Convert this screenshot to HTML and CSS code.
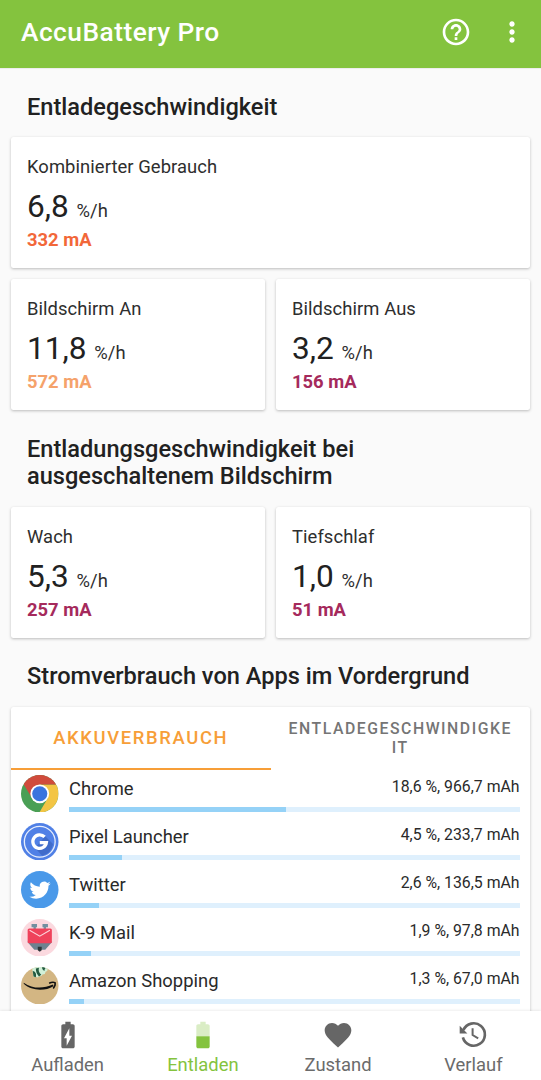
FILE: index.html
```html
<!DOCTYPE html>
<html lang="de">
<head>
    <meta charset="utf-8">
    <title>AccuBattery Pro</title>
    <link rel="stylesheet" href="styles.css">
</head>
<body>
    <header class="toolbar">
        <h1>AccuBattery Pro</h1>
        <svg class="help" viewBox="0 0 24 24"><path d="M11 18h2v-2h-2v2zm1-16C6.480 2 2 6.480 2 12s4.480 10 10 10 10-4.480 10-10S17.520 2 12 2zm0 18c-4.410 0-8-3.590-8-8s3.590-8 8-8 8 3.590 8 8-3.590 8-8 8zm0-14c-2.210 0-4 1.790-4 4h2c0-1.100.9-2 2-2s2 .9 2 2c0 2-3 1.750-3 5h2c0-2.250 3-2.500 3-5 0-2.210-1.790-4-4-4z"/></svg>
        <svg class="more" viewBox="0 0 24 24"><path d="M12 8c1.100 0 2-.9 2-2s-.9-2-2-2-2 .9-2 2 .9 2 2 2zm0 2c-1.100 0-2 .9-2 2s.9 2 2 2 2-.9 2-2-.9-2-2-2zm0 6c-1.100 0-2 .9-2 2s.9 2 2 2 2-.9 2-2-.9-2-2-2z"/></svg>
    </header>

    <main class="content">
        <h2>Entladegeschwindigkeit</h2>
        <div class="cards">
            <div class="card wide">
                <div class="label">Kombinierter Gebrauch</div>
                <div class="value">6,8 <span>%/h</span></div>
                <div class="current high">332 mA</div>
            </div>
            <div class="card">
                <div class="label">Bildschirm An</div>
                <div class="value">11,8 <span>%/h</span></div>
                <div class="current medium">572 mA</div>
            </div>
            <div class="card">
                <div class="label">Bildschirm Aus</div>
                <div class="value">3,2 <span>%/h</span></div>
                <div class="current low">156 mA</div>
            </div>
        </div>

        <h2>Entladungsgeschwindigkeit bei ausgeschaltenem Bildschirm</h2>
        <div class="cards">
            <div class="card">
                <div class="label">Wach</div>
                <div class="value">5,3 <span>%/h</span></div>
                <div class="current low">257 mA</div>
            </div>
            <div class="card">
                <div class="label">Tiefschlaf</div>
                <div class="value">1,0 <span>%/h</span></div>
                <div class="current low">51 mA</div>
            </div>
        </div>

        <h2>Stromverbrauch von Apps im Vordergrund</h2>
        <div class="apps">
            <div class="tabs">
                <div class="tab active">AKKUVERBRAUCH</div>
                <div class="tab">ENTLADEGESCHWINDIGKEIT</div>
            </div>

            <div class="app">
                <svg class="app-icon" viewBox="0 0 48 48">
                    <defs>
                        <clipPath id="round"><circle cx="24" cy="24" r="24"/></clipPath>
                    </defs>
                    <g clip-path="url(#round)">
                        <path fill="#4a9f55" d="M0 0h48v48H0z"/>
                        <path fill="#f3c544" d="M24 12h24v36H23.500L34 30z"/>
                        <path fill="#d04b3c" d="M3.500 12L14 29.500 24 12h24V0H0z"/>
                    </g>
                    <circle cx="24" cy="24" r="12" fill="#fff"/>
                    <circle cx="24" cy="24" r="9.700" fill="#3a74de"/>
                </svg>
                <div class="app-info">
                    <div class="app-text"><span class="name">Chrome</span><span class="usage">18,6 %, 966,7 mAh</span></div>
                    <div class="bar"><div class="fill" style="width: 48.2%"></div></div>
                </div>
            </div>
            <div class="app">
                <svg class="app-icon" viewBox="0 0 48 48">
                    <circle cx="24" cy="24" r="24" fill="#5080e6"/>
                    <path d="M31 17l10 10a18.500 18.500 0 0 1-14 15l-9-10z" fill="#416cca"/>
                    <circle cx="24" cy="24" r="19.700" fill="none" stroke="#e7eefc" stroke-width="1.700"/>
                    <path d="M30.200 17.800A8.700 8.700 0 1 0 32.500 25H24" fill="none" stroke="#fff" stroke-width="4.200"/>
                </svg>
                <div class="app-info">
                    <div class="app-text"><span class="name">Pixel Launcher</span><span class="usage">4,5 %, 233,7 mAh</span></div>
                    <div class="bar"><div class="fill" style="width: 11.7%"></div></div>
                </div>
            </div>
            <div class="app">
                <svg class="app-icon" viewBox="0 0 48 48">
                    <circle cx="24" cy="24" r="24" fill="#4a99e9"/>
                    <path transform="translate(10.800 10.900) scale(1.130)" fill="#fff" d="M23.953 4.570a10 10 0 01-2.825.775 4.958 4.958 0 002.163-2.723c-.951.555-2.005.959-3.127 1.184a4.920 4.920 0 00-8.384 4.482C7.690 8.095 4.067 6.130 1.640 3.162a4.822 4.822 0 00-.666 2.475c0 1.710.87 3.213 2.188 4.096a4.904 4.904 0 01-2.228-.616v.06a4.923 4.923 0 003.946 4.827 4.996 4.996 0 01-2.212.085 4.936 4.936 0 004.604 3.417 9.867 9.867 0 01-6.102 2.105c-.39 0-.779-.023-1.170-.067a13.995 13.995 0 007.557 2.209c9.053 0 13.998-7.496 13.998-13.985 0-.21 0-.42-.015-.63A9.935 9.935 0 0024 4.590z"/>
                </svg>
                <div class="app-info">
                    <div class="app-text"><span class="name">Twitter</span><span class="usage">2,6 %, 136,5 mAh</span></div>
                    <div class="bar"><div class="fill" style="width: 6.7%"></div></div>
                </div>
            </div>
            <div class="app">
                <svg class="app-icon" viewBox="0 0 48 48">
                    <circle cx="24" cy="24" r="24" fill="#fbd9df"/>
                    <path fill="#7290a0" d="M13.500 6.500h7v4h-1.500v3h-3v-3h-2.500zM27.500 6.500h7v4H32v3h-3v-3h-1.500z"/>
                    <path fill="#6d8290" d="M8 29h32l-9 10.500H17z"/>
                    <rect x="8.500" y="12" width="31" height="19" rx="2" fill="#ef425b"/>
                    <path d="M11 14.500L24 22l13-7.500" fill="none" stroke="#fbd5dc" stroke-width="1.500"/>
                    <path fill="#2e3538" d="M21.500 35.500h5v4.500L24 42l-2.500-2z"/>
                </svg>
                <div class="app-info">
                    <div class="app-text"><span class="name">K-9 Mail</span><span class="usage">1,9 %, 97,8 mAh</span></div>
                    <div class="bar"><div class="fill" style="width: 4.9%"></div></div>
                </div>
            </div>
            <div class="app">
                <svg class="app-icon" viewBox="0 0 48 48">
                    <circle cx="24" cy="24" r="24" fill="#d3b683"/>
                    <g clip-path="url(#round)">
                        <path fill="#d1f0d8" d="M14 0h21l-1.500 5-2 1-1 3-3 .5-1.500 2-3 .5-1.500 1.500-3-1-2.500.5z"/>
                        <path fill="#245b41" d="M15 5c4 1 5 4 4 8l-3-1zM19 2l4-1c-1 4 0 6 3 9l-3 2c-3-3-4-6-4-10zM27 0h6c-2 1-3 3-3 5-2-1-3-2-3-5z"/>
                    </g>
                    <path fill="#111" d="M3.500 20C15 28 28 28 41 22.500l.5 2C31 31 14 31 3.500 21.500z"/>
                    <path d="M36 20.800c3-1.500 6-1.500 7.500-.8.700 2-.2 5-2.200 7.500" fill="none" stroke="#111" stroke-width="2"/>
                </svg>
                <div class="app-info">
                    <div class="app-text"><span class="name">Amazon Shopping</span><span class="usage">1,3 %, 67,0 mAh</span></div>
                    <div class="bar"><div class="fill" style="width: 3.3%"></div></div>
                </div>
            </div>
        </div>
    </main>

    <nav class="bottom-nav">
        <div class="nav-item">
            <svg viewBox="0 0 24 24"><path d="M15.670 4H14V2h-4v2H8.330C7.600 4 7 4.600 7 5.330v15.330C7 21.400 7.600 22 8.330 22h7.330c.74 0 1.340-.6 1.340-1.330V5.330C17 4.600 16.400 4 15.670 4zM11 20v-5.500H9L13 7v5.500h2L11 20z"/></svg>
            <span>Aufladen</span>
        </div>
        <div class="nav-item selected">
            <svg viewBox="0 0 24 24"><path fill-opacity=".3" d="M17 5.330C17 4.600 16.400 4 15.670 4H14V2h-4v2H8.330C7.600 4 7 4.600 7 5.330V13h10V5.330z"/><path d="M7 13v7.670C7 21.400 7.600 22 8.330 22h7.330c.74 0 1.340-.6 1.340-1.330V13H7z"/></svg>
            <span>Entladen</span>
        </div>
        <div class="nav-item">
            <svg viewBox="0 0 24 24"><path d="M12 21.350l-1.450-1.320C5.400 15.360 2 12.280 2 8.500 2 5.420 4.420 3 7.500 3c1.740 0 3.410.81 4.500 2.090C13.090 3.810 14.760 3 16.500 3 19.580 3 22 5.420 22 8.500c0 3.780-3.400 6.860-8.550 11.540L12 21.350z"/></svg>
            <span>Zustand</span>
        </div>
        <div class="nav-item">
            <svg class="history" viewBox="0 0 24 24"><path d="M4.800 8.300A8.400 8.400 0 1 1 4.400 13.800"/><path class="hands" d="M11.700 7v5l4.200 2.500"/><path class="arrow" d="M2 5v5.800h5.800z"/></svg>
            <span>Verlauf</span>
        </div>
    </nav>
</body>
</html>
```
FILE: styles.css
```css
* {
    box-sizing: border-box;
}
body {
    margin: 0;
    height: 1080px;
    display: flex;
    flex-direction: column;
    overflow: hidden;
    background-color: #fafafa;
    color: #212121;
    font-family: Roboto, "Liberation Sans", sans-serif;
}

/* Top bar */
.toolbar {
    display: flex;
    align-items: center;
    flex: none;
    height: 68px;
    padding: 0 13px 5px 21px;
    background-color: #84c33e;
    color: white;
    box-shadow: 0 0 1px rgba(0, 0, 0, 0.3);
}
.toolbar h1 {
    flex: 1;
    margin: 1px 0 0;
    font-size: 26.3px;
    font-weight: 500;
    letter-spacing: 0.48px;
}
.toolbar svg {
    width: 32px;
    height: 32px;
    fill: white;
}
.toolbar .more {
    margin-left: 24px;
}

/* Scrolling content */
.content {
    flex: 1;
    min-height: 0;
    overflow: hidden;
    padding: 0 11px;
}
h2 {
    margin: 25.5px 120px 16px 16px;
    font-size: 23.58px;
    font-weight: 500;
    line-height: 27.5px;
}
h2:last-of-type {
    margin-right: 0;
}
.cards {
    display: grid;
    grid-template-columns: 1fr 1fr;
    gap: 11px;
}
.card {
    height: 131px;
    padding: 18px 16px 0;
    background-color: white;
    border-radius: 2.5px;
    box-shadow: 0 1px 3px rgba(0, 0, 0, 0.25);
}
.wide {
    grid-column: span 2;
}
.label {
    color: #2e2e2e;
    font-size: 18.4px;
    letter-spacing: 0.07px;
    line-height: 24px;
}
.value {
    margin-top: 9px;
    font-size: 31.6px;
    line-height: 38px;
}
.value span {
    color: #2e2e2e;
    font-size: 18.4px;
}
.current {
    margin-top: -2px;
    font-size: 18.4px;
    font-weight: 700;
    line-height: 24px;
}
.high {
    color: #f26739;
}
.medium {
    color: #f5a26b;
}
.low {
    color: #a52a5c;
}

/* App list */
.apps {
    height: 400px;
    background-color: white;
    border-radius: 2.5px;
    box-shadow: 0 1px 3px rgba(0, 0, 0, 0.25);
}
.tabs {
    display: flex;
    height: 63px;
}
.tab {
    display: flex;
    align-items: center;
    justify-content: center;
    width: 50%;
    padding: 0 16px;
    color: #757575;
    font-size: 15.8px;
    font-weight: 500;
    letter-spacing: 1.53px;
    line-height: 19px;
    text-align: center;
    word-break: break-all;
}
.tab.active {
    border-bottom: 2.6px solid #f79e38;
    color: #f79e38;
    font-size: 18.4px;
    letter-spacing: 1.65px;
}
.app {
    display: flex;
    height: 48px;
    padding: 5px 10.5px 0 10px;
}
.app-icon {
    width: 37.5px;
    height: 37.5px;
}
.app-info {
    flex: 1;
    margin-left: 10.5px;
}
.app-text {
    display: flex;
    justify-content: space-between;
    height: 32px;
    color: #2a2a2a;
}
.name {
    font-size: 18.4px;
    line-height: 28px;
}
.usage {
    font-size: 15.8px;
    line-height: 24px;
}
.bar {
    height: 5px;
    background-color: #dff0fd;
}
.fill {
    height: 100%;
    background-color: #95d2f7;
}

/* Bottom navigation */
.bottom-nav {
    display: flex;
    flex: none;
    height: 69px;
    background-color: white;
    box-shadow: 0 0 3px rgba(0, 0, 0, 0.12);
}
.nav-item {
    display: flex;
    flex: 1;
    flex-direction: column;
    align-items: center;
    padding-top: 8px;
    color: #6b6b6b;
    font-size: 18.4px;
    line-height: 24px;
}
.nav-item svg {
    width: 32px;
    height: 32px;
    fill: #666;
}
.nav-item .history {
    fill: none;
    stroke: #666;
    stroke-width: 2;
}
.history .hands {
    stroke-width: 1.5;
}
.history .arrow {
    fill: #666;
    stroke: none;
}
.nav-item span {
    margin-top: 2px;
}
.nav-item.selected {
    color: #84c33e;
}
.nav-item.selected svg {
    fill: #84c33e;
}
```
